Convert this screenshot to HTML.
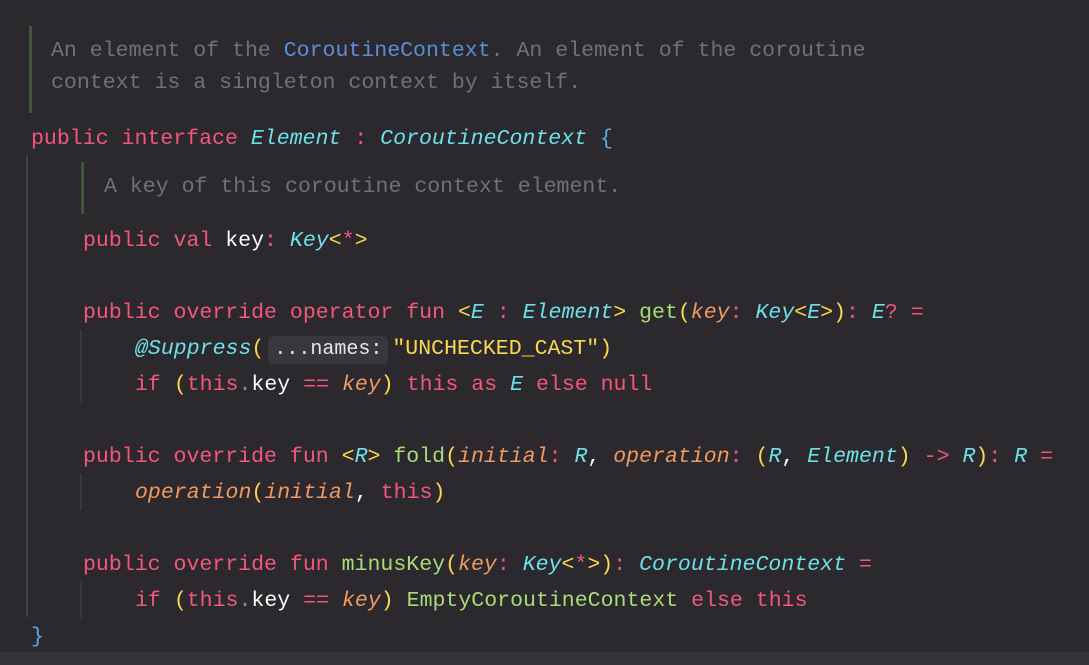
<!DOCTYPE html>
<html><head><meta charset="utf-8"><style>
body{margin:0;width:1089px;height:665px;background:#2b292e;overflow:hidden;position:relative;font-family:"Liberation Mono","DejaVu Sans Mono",monospace;font-size:21.55px}
.l{position:absolute;height:36px;line-height:36px;white-space:pre;color:#fcfcfa}
.k{color:#f2577a}.t{color:#6ee0e8;font-style:italic}.y{color:#fcd84c}.g{color:#a8dc76}.p{color:#f09a60;font-style:italic}.c{color:#727072}.b{color:#5b8ed8}.s{color:#fcd84c}.gr{color:#8b888f}
.bar{position:absolute;width:3px}
.h{display:inline-block;background:#39373c;border-radius:5px;color:#e8e6ea;font-size:20px;line-height:28px;padding:0 6px;margin:0 4px}
</style></head><body>
<div class="bar" style="left:29px;top:26px;height:87px;background:#45543c"></div>
<div class="bar" style="left:26px;top:155px;height:462px;background:#3c434e;width:2px"></div>
<div class="bar" style="left:81px;top:162px;height:52px;background:#45543c"></div>
<div class="bar" style="left:80px;top:330px;height:72px;background:#38373b;width:2px"></div>
<div class="bar" style="left:80px;top:474px;height:36px;background:#38373b;width:2px"></div>
<div class="bar" style="left:80px;top:582px;height:36px;background:#38373b;width:2px"></div>
<div style="position:absolute;left:0;top:652px;width:1089px;height:13px;background:#333236"></div>
<div class="l c" style="left:51px;top:33px">An element of the <span class="b">CoroutineContext</span>. An element of the coroutine</div>
<div class="l c" style="left:51px;top:65px">context is a singleton context by itself.</div>
<div class="l" style="left:31px;top:121px"><span class="k">public interface</span> <span class="t">Element</span> <span class="k">:</span> <span class="t">CoroutineContext</span> <span style="color:#5aa9e6">{</span></div>
<div class="l c" style="left:104px;top:169px">A key of this coroutine context element.</div>
<div class="l" style="left:83px;top:223px"><span class="k">public val</span> key<span class="k">:</span> <span class="t">Key</span><span class="y">&lt;</span><span class="k">*</span><span class="y">&gt;</span></div>
<div class="l" style="left:83px;top:295px"><span class="k">public override operator fun</span> <span class="y">&lt;</span><span class="t">E</span> <span class="k">:</span> <span class="t">Element</span><span class="y">&gt;</span> <span class="g">get</span><span class="y">(</span><span class="p">key</span><span class="k">:</span> <span class="t">Key</span><span class="y">&lt;</span><span class="t">E</span><span class="y">&gt;</span><span class="y">)</span><span class="k">:</span> <span class="t">E</span><span class="k">?</span> <span class="k">=</span></div>
<div class="l" style="left:135px;top:331px"><span class="t">@Suppress</span><span class="y">(</span><span class="h">...names:</span><span class="s">"UNCHECKED_CAST"</span><span class="y">)</span></div>
<div class="l" style="left:135px;top:367px"><span class="k">if</span> <span class="y">(</span><span class="k">this</span><span class="gr">.</span>key <span class="k">==</span> <span class="p">key</span><span class="y">)</span> <span class="k">this as</span> <span class="t">E</span> <span class="k">else null</span></div>
<div class="l" style="left:83px;top:439px"><span class="k">public override fun</span> <span class="y">&lt;</span><span class="t">R</span><span class="y">&gt;</span> <span class="g">fold</span><span class="y">(</span><span class="p">initial</span><span class="k">:</span> <span class="t">R</span>, <span class="p">operation</span><span class="k">:</span> <span class="y">(</span><span class="t">R</span>, <span class="t">Element</span><span class="y">)</span> <span class="k">-&gt;</span> <span class="t">R</span><span class="y">)</span><span class="k">:</span> <span class="t">R</span> <span class="k">=</span></div>
<div class="l" style="left:135px;top:475px"><span class="p">operation</span><span class="y">(</span><span class="p">initial</span>, <span class="k">this</span><span class="y">)</span></div>
<div class="l" style="left:83px;top:547px"><span class="k">public override fun</span> <span class="g">minusKey</span><span class="y">(</span><span class="p">key</span><span class="k">:</span> <span class="t">Key</span><span class="y">&lt;</span><span class="k">*</span><span class="y">&gt;</span><span class="y">)</span><span class="k">:</span> <span class="t">CoroutineContext</span> <span class="k">=</span></div>
<div class="l" style="left:135px;top:583px"><span class="k">if</span> <span class="y">(</span><span class="k">this</span><span class="gr">.</span>key <span class="k">==</span> <span class="p">key</span><span class="y">)</span> <span class="g">EmptyCoroutineContext</span> <span class="k">else this</span></div>
<div class="l" style="left:31px;top:619px;color:#5aa9e6">}</div>
</body></html>
